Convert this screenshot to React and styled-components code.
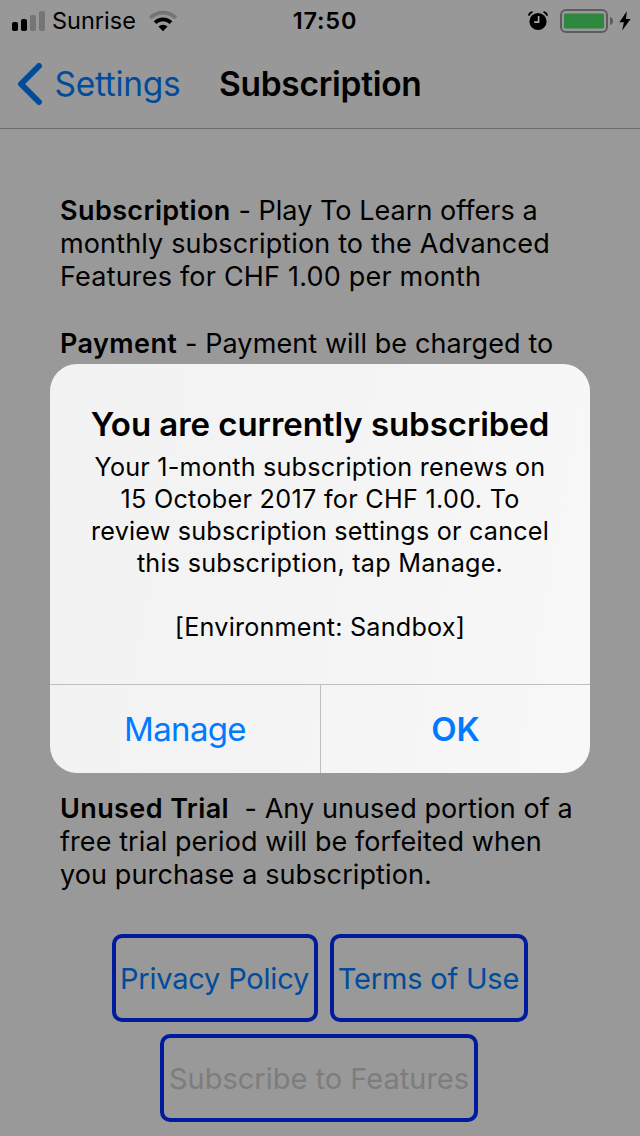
import React from "react";
import styled, { createGlobalStyle } from "styled-components";

const GlobalStyle = createGlobalStyle`
  *, *::before, *::after { box-sizing: border-box; }
  body {
    margin: 0;
    background: #999;
    color: #000;
    font-family: Inter, "Liberation Sans", sans-serif;
    -webkit-font-smoothing: antialiased;
  }
  button { font: inherit; color: inherit; background: none; border: 0; padding: 0; margin: 0; }
`;

const Screen = styled.div`
  position: relative;
  display: flex;
  flex-direction: column;
  width: 640px;
  height: 1136px;
  overflow: hidden;
`;

const Header = styled.header`
  height: 129px;
  background: #989898;
  border-bottom: 1px solid #6b6b6b;
`;

const StatusBar = styled.div`
  display: grid;
  grid-template-columns: 1fr auto 1fr;
  align-items: center;
  height: 40px;
  padding: 0 9px 0 12px;
  font-size: 23.5px;
  line-height: 40px;
`;

const StatusSide = styled.div`
  display: flex;
  align-items: center;
  justify-content: ${(p) => (p.$end ? "flex-end" : "flex-start")};
  height: 40px;
`;

const Carrier = styled.span`
  margin: 1px 12px 0 7px;
`;

const Clock = styled.span`
  padding: 1px 0 0 7px;
  font-weight: 600;
  letter-spacing: 0.8px;
`;

const NavBar = styled.nav`
  display: flex;
  align-items: center;
  height: 88px;
  padding-left: 17px;
`;

const BackButton = styled.button`
  display: flex;
  align-items: center;
  gap: 11.5px;
  width: 202px;
  color: #004c9b;
  font-size: 33.5px;
  line-height: 44px;
  letter-spacing: -0.3px;
`;

const NavTitle = styled.h1`
  margin: 0;
  font-size: 33.5px;
  font-weight: 600;
  line-height: 44px;
  letter-spacing: -0.28px;
`;

const Article = styled.main`
  display: flex;
  flex-direction: column;
  padding: 65px 60px 0;
`;

const Paragraph = styled.p`
  margin: 0 0 ${(p) => p.$gap || 0}px;
  font-size: 27px;
  line-height: 33px;
`;

const Term = styled.strong`
  font-weight: 600;
  letter-spacing: 0.4px;
`;

const Line = styled.span`
  display: block;
  white-space: pre;
  letter-spacing: ${(p) => p.$track || 0}px;
`;

const Actions = styled.div`
  display: grid;
  justify-content: center;
  gap: 12px;
  padding-top: 43px;
`;

const ActionRow = styled.div`
  display: flex;
  justify-content: ${(p) => (p.$start ? "flex-start" : "center")};
  padding-left: ${(p) => (p.$start ? 48 : 0)}px;
  gap: 12px;
`;

const OutlineButton = styled.button`
  display: flex;
  align-items: center;
  justify-content: center;
  width: ${(p) => p.$width}px;
  height: 88px;
  padding-right: 1px;
  border: 4px solid #001c9c;
  border-radius: 10px;
  color: #004c9b;
  font-size: 29px;
  white-space: nowrap;
  letter-spacing: ${(p) => p.$track || 0}px;

  &:disabled {
    padding-right: 0;
    color: #7d7d7d;
  }
`;

const Alert = styled.section`
  position: absolute;
  top: 364px;
  left: 50px;
  display: flex;
  flex-direction: column;
  width: 540px;
  height: 409px;
  border-radius: 27px;
  overflow: hidden;
  text-align: center;
  background: linear-gradient(100deg, #f2f2f2, #f4f4f4 50%, #f8f8f8);
`;

const AlertBody = styled.div`
  flex: 1;
  padding-top: 39px;
`;

const AlertTitle = styled.h2`
  margin: 0;
  font-size: 33px;
  font-weight: 600;
  line-height: 42px;
  white-space: nowrap;
  letter-spacing: -0.06px;
`;

const AlertText = styled.p`
  margin: 6px 0 0;
  font-size: 25.2px;
  line-height: 32px;
`;

const AlertActions = styled.div`
  display: grid;
  grid-template-columns: 270px 1fr;
  height: 89px;
  border-top: 1px solid #bfbfc3;
`;

const AlertButton = styled.button`
  padding-bottom: 1px;
  color: #007aff;
  font-size: 33px;
  font-weight: ${(p) => (p.$primary ? 600 : 400)};
  letter-spacing: ${(p) => (p.$primary ? 0 : -0.65)}px;

  & + & { border-left: 1px solid #bfbfc3; }
`;

const SignalIcon = () => (
  <svg width="33" height="20" viewBox="0 0 33 20">
    <rect x="0" y="11" width="6" height="9" rx="1.8" fill="#000" />
    <rect x="9" y="8" width="6" height="12" rx="1.8" fill="#000" />
    <rect x="18" y="4" width="6" height="16" rx="1.8" fill="#757575" />
    <rect x="27" y="0" width="6" height="20" rx="1.8" fill="#757575" />
  </svg>
);

const WifiIcon = () => (
  <svg width="30" height="22" viewBox="0 0 30 22" fill="none">
    <path d="M2.2 7.8a18.2 18.2 0 0 1 25.6 0" stroke="#757575" strokeWidth="3.8" />
    <path d="M7 12.7a11.4 11.4 0 0 1 16 0" stroke="#000" strokeWidth="3.8" />
    <path d="M10.4 16.6a6.6 6.6 0 0 1 9.2 0L15 21.2z" fill="#000" />
  </svg>
);

const AlarmIcon = () => (
  <svg width="20" height="20" viewBox="0 0 20 20">
    <circle cx="10" cy="10.5" r="8.6" fill="#000" />
    <path d="M.8 4.6C1.2 2.6 2.6 1.4 4.5 1.1M19.2 4.6c-.4-2-1.8-3.2-3.7-3.5" fill="none" stroke="#000" strokeWidth="2" />
    <path d="M10.6 5v6.1H6.2" fill="none" stroke="#aaa" strokeWidth="1.6" />
  </svg>
);

const BatteryIcon = () => (
  <svg width="54" height="24" viewBox="0 0 54 24">
    <rect x="1" y="1" width="46" height="22" rx="5" fill="none" stroke="#5c5c5c" strokeWidth="2" />
    <rect x="4" y="4.500" width="40" height="15" rx="1.5" fill="#2e873f" />
    <path d="M50 8c2 .5 3 2 3 4s-1 3.5-3 4z" fill="#5c5c5c" />
  </svg>
);

const BoltIcon = () => (
  <svg width="12" height="20" viewBox="0 0 12 20">
    <path d="M7.8.2.4 11.3h4.5L3.2 19.6 11.6 7.9H7z" fill="#000" />
  </svg>
);

const BackIcon = () => (
  <svg width="26" height="42" viewBox="0 0 26 42" fill="none">
    <path d="M22 3 4 21l18 18" stroke="#004c9b" strokeWidth="6" strokeLinecap="round" strokeLinejoin="round" />
  </svg>
);

const SideIcon = styled.span`
  display: flex;
  margin-left: ${(p) => p.$gap}px;
`;

export default function App() {
  return (
    <>
      <GlobalStyle />
      <Screen>
        <Header>
          <StatusBar>
            <StatusSide>
              <SignalIcon />
              <Carrier>Sunrise</Carrier>
              <WifiIcon />
            </StatusSide>
            <Clock>17:50</Clock>
            <StatusSide $end>
              <AlarmIcon />
              <SideIcon $gap={12}><BatteryIcon /></SideIcon>
              <SideIcon $gap={5}><BoltIcon /></SideIcon>
            </StatusSide>
          </StatusBar>
          <NavBar>
            <BackButton><BackIcon />Settings</BackButton>
            <NavTitle>Subscription</NavTitle>
          </NavBar>
        </Header>

        <Article>
          <Paragraph $gap={34}>
            <Line $track={0.04}><Term>Subscription</Term> - Play To Learn offers a</Line>
            <Line $track={0.14}>monthly subscription to the Advanced</Line>
            <Line $track={0.2}>Features for CHF 1.00 per month</Line>
          </Paragraph>
          <Paragraph $gap={432}>
            <Line $track={0.1}><Term>Payment</Term> - Payment will be charged to</Line>
          </Paragraph>
          <Paragraph>
            <Line $track={0.08}><Term>Unused Trial</Term>{"  "}- Any unused portion of a</Line>
            <Line $track={0.08}>free trial period will be forfeited when</Line>
            <Line $track={0.11}>you purchase a subscription.</Line>
          </Paragraph>
        </Article>

        <Actions>
          <ActionRow>
            <OutlineButton $width={206} $track={-0.2}>Privacy Policy</OutlineButton>
            <OutlineButton $width={198} $track={-0.2}>Terms of Use</OutlineButton>
          </ActionRow>
          <ActionRow $start>
            <OutlineButton $width={318} disabled>Subscribe to Features</OutlineButton>
          </ActionRow>
        </Actions>

        <Alert role="alertdialog">
          <AlertBody>
            <AlertTitle>You are currently subscribed</AlertTitle>
            <AlertText>
              <Line $track={0.2}>Your 1-month subscription renews on</Line>
              <Line $track={0.29}>15 October 2017 for CHF 1.00. To</Line>
              <Line $track={0.19}>review subscription settings or cancel</Line>
              <Line $track={0.23}>this subscription, tap Manage.</Line>
              <Line> </Line>
              <Line $track={0.2}>[Environment: Sandbox]</Line>
            </AlertText>
          </AlertBody>
          <AlertActions>
            <AlertButton>Manage</AlertButton>
            <AlertButton $primary>OK</AlertButton>
          </AlertActions>
        </Alert>
      </Screen>
    </>
  );
}
